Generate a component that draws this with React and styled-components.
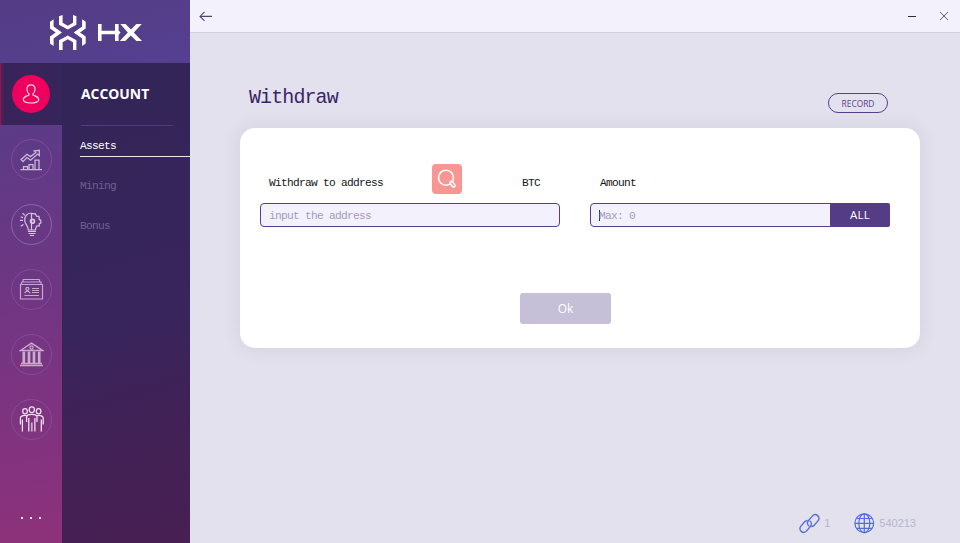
import React from "react";
import styled, { createGlobalStyle, css } from "styled-components";

const Global = createGlobalStyle`
  * { box-sizing: border-box; }
  body { margin: 0; }
  svg { display: block; }
`;

const mono = css`
  font-family: "Liberation Mono", monospace;
  font-size: 11.2px;
  letter-spacing: -0.72px;
  line-height: 14px;
  white-space: pre;
`;

const Window = styled.div`
  display: flex;
  width: 960px;
  height: 543px;
  overflow: hidden;
  background: #e3e1ed;
`;

const Sidebar = styled.aside`
  width: 190px;
  display: flex;
  flex-direction: column;
`;

const Brand = styled.div`
  height: 63px;
  padding: 15px 0 0 49px;
  background: linear-gradient(165deg, #543b86, #553f8a 50%, #543f92);
`;

const Columns = styled.div`
  flex: 1;
  display: flex;
`;

const Rail = styled.nav`
  width: 62px;
  display: flex;
  flex-direction: column;
  align-items: center;
  background: linear-gradient(171deg, #583c88 5%, #6b3783 42%, #7a3481 65%, #8b327b 96%);
`;

const ActiveCell = styled.div`
  width: 62px;
  height: 62px;
  padding: 12px 0 0 12px;
  background: linear-gradient(90deg, #b40d5a 0, #55204f 1.5px, #39245a 4px, #36255a);
`;

const Avatar = styled.div`
  width: 38px;
  height: 38px;
  border-radius: 50%;
  background: #f0005e;
`;

const RailList = styled.div`
  display: flex;
  flex-direction: column;
  gap: 24px;
  padding: 14px 0 0 1px;
`;

const RailButton = styled.div`
  width: 41px;
  height: 41px;
  border: 1px solid ${(p) => (p.$strong ? "#8a66a5" : "#824d97")};
  border-radius: 50%;
  display: flex;
  align-items: center;
  justify-content: center;
`;

const Dots = styled.div`
  display: flex;
  gap: 7px;
  margin: 77px 0 0 0;
`;

const Dot = styled.i`
  width: 2px;
  height: 2px;
  background: #f0e6f2;
`;

const Submenu = styled.nav`
  width: 128px;
  padding-left: 18px;
  background: linear-gradient(165deg, #332558 0%, #38255b 55%, #3e2257 68%, #432155 82%, #481f53 100%);
`;

const Section = styled.h2`
  margin: 0 0 0 1px;
  width: 92px;
  height: 63px;
  border-bottom: 1px solid #503b83;
  color: #fff;
  font: 700 13.9px/62px "Open Sans", sans-serif;
`;

const MenuItem = styled.div`
  ${mono}
  height: 31px;
  margin-bottom: 9px;
  padding-top: 13px;
  color: ${(p) => (p.$active ? "#fff" : "#725f91")};
  border-bottom: 1px solid ${(p) => (p.$active ? "#e9e5f1" : "transparent")};
`;

const Main = styled.div`
  flex: 1;
  display: flex;
  flex-direction: column;
`;

const TitleBar = styled.header`
  height: 33px;
  padding: 0 11px 0 9px;
  display: flex;
  align-items: center;
  background: #f3f1fb;
  border-bottom: 1px solid #d3cfe4;
`;

const WindowControls = styled.div`
  margin-left: auto;
  display: flex;
  align-items: center;
  gap: 23px;
`;

const Heading = styled.div`
  display: flex;
  justify-content: space-between;
  height: 95px;
  padding: 53px 72px 0 59px;
`;

const PageTitle = styled.h1`
  margin: 0;
  font: 400 20px/24px "Liberation Mono", monospace;
  letter-spacing: -0.9px;
  color: #3b2767;
`;

const RecordButton = styled.button`
  width: 60px;
  height: 20px;
  margin-top: 7px;
  padding: 2px 0 0;
  border: 1px solid #573f8c;
  border-radius: 10px;
  background: transparent;
  color: #573f8c;
  font: 8.4px/16px "Open Sans", sans-serif;
`;

const Card = styled.section`
  width: 680px;
  height: 220px;
  margin-left: 50px;
  padding: 36px 30px 0 20px;
  border-radius: 15px;
  background: #fff;
  box-shadow: 0 0 20px rgba(85, 62, 135, 0.11);
`;

const Fields = styled.div`
  display: grid;
  grid-template-columns: 300px 300px;
  column-gap: 30px;
`;

const LabelRow = styled.div`
  ${mono}
  display: flex;
  height: 39px;
  padding: 0 20px 0 ${(p) => p.$indent || 9}px;
  line-height: 39px;
  color: #161616;
`;

const ScanButton = styled.div`
  width: 30px;
  height: 30px;
  margin: 0 auto 0 49px;
  border-radius: 4px;
  background: #f99593;
`;

const InputBox = styled.div`
  ${mono}
  height: 24px;
  display: flex;
  align-items: center;
  padding: 1px 0 0 8px;
  border: 1px solid #573f8c;
  border-radius: 4px;
  background: #f3f1fb;
  color: #a59bc3;
`;

const Caret = styled.i`
  width: 1px;
  height: 11px;
  margin-right: -1px;
  background: #33235d;
`;

const AllButton = styled.button`
  width: 60px;
  height: 24px;
  margin: -2px -1px -1px auto;
  padding: 0;
  border: 0;
  border-radius: 2px;
  background: #553c87;
  color: #fff;
  font: 11.5px/24px "Open Sans", sans-serif;
  letter-spacing: 0.2px;
`;

const OkButton = styled.button`
  display: block;
  width: 91px;
  height: 31px;
  margin: 66px 0 0 260px;
  padding: 0;
  border: 0;
  border-radius: 3px;
  background: #c5bfd7;
  color: #fff;
  font: 12px/31px "Open Sans", sans-serif;
`;

const StatusBar = styled.footer`
  font: 11px/14px "Liberation Sans", sans-serif;
  margin-top: auto;
  height: 40px;
  padding-right: 44px;
  display: flex;
  justify-content: flex-end;
  align-items: center;
  color: #b5b6d0;
`;

const StatusItem = styled.div`
  display: flex;
  align-items: center;
  gap: 4px;
  margin-left: 24px;
`;

const LogoMark = () => (
  <svg width="93" height="36" viewBox="0 0 93 36" fill="#fff">
    <path d="M10 1.2L13.6 0V7.7L18.8 10.7L24 7.7V0L27.4 1.2V9.7L18.8 14.6L10 9.7Z" />
    <path d="M10 35V25.3L18.8 20.4L27.4 25.3V35H24V27.3L18.8 24.3L13.6 27.3V35Z" />
    <path d="M1 6.8L4.6 4.3V11.5L13 17.5L4.6 23.5V31L1 28.5V21.6L6.7 17.5L1 13.4Z" />
    <path d="M36.7 6.8L33.1 4.3V11.5L24.7 17.5L33.1 23.5V31L36.7 28.5V21.6L31 17.5L36.7 13.4Z" />
    <path d="M49 9H52.6V15.8H66V9H69.6V15.4L71.6 17.6L69.6 19.8V26H66V19.2H52.6V26H49Z" />
    <path d="M71.3 9H76.5L82 14.5L87.4 9H92.8L84.8 17.5L93 26H87.4L81.8 20.5L76.2 26H70.8L78.8 17.5Z" />
  </svg>
);

const UserIcon = () => (
  <svg width="38" height="38" viewBox="0 0 38 38" fill="none" stroke="#ffd6e4" strokeWidth="1.2">
    <path d="M19 9.8C16.3 9.8 15 11.7 15 14.2C15 16.4 15.9 18 17 18.8V19.9C15 21.2 11.3 21.3 11.3 24.6C11.3 26.8 14.3 28 19 28S26.7 26.8 26.7 24.6C26.7 21.3 23 21.2 21 19.9V18.8C22.1 18 23 16.4 23 14.2C23 11.7 21.7 9.8 19 9.8Z" />
  </svg>
);

const ChartIcon = () => (
  <svg width="23" height="23" viewBox="0 0 23 23" fill="none" stroke="#ceb9da" strokeWidth="1.25">
    <path d="M0.5 21.5H22M3.5 21V18.5H7.5V21M9 21V16.5H13V21M15 21V12H19V21" />
    <path d="M1.1 11.5L7 6.2L10.5 8.6L15.8 4.4L14.2 2.9L19.3 2.3V7.6L17.6 6.1L10.6 12.3L7 9.6L3 13.6Z" />
  </svg>
);

const IdeaIcon = () => (
  <svg width="25" height="27" viewBox="0 0 25 27" fill="none" stroke="#d8c4df" strokeWidth="1.2">
    <path d="M12.5 2C7.5 2.1 5 6 5.8 10.3C6.4 13.5 9.2 14.5 9.3 19H16.5C16.5 16.5 17.5 15.8 18 14.8L20.3 14.8V12.6L21.8 12V9.2L20.2 8.6L20 5.4L17.4 5.2L16.5 2.8L12.5 2.4V18.5" />
    <circle cx="13.5" cy="10.3" r="1.9" strokeWidth="1.8" />
    <path d="M9 20.5H17M9.5 22.5H16.5M11 24.5H15M1 9.3H4M1.7 15.3L4.5 13.6M3.5 2.2L6 4.4M1.7 5.8L4 6.8" />
  </svg>
);

const NewsIcon = () => (
  <svg width="25" height="23" viewBox="0 0 25 23" fill="none" stroke="#c3a9cd">
    <path d="M4 1.5H20.5M4 1.5V3.5M20.5 1.5V3.5M2.5 4H22V6M2.5 4V6M1.5 6.5H23.5V21H1.5Z" strokeWidth="1.2" />
    <path d="M5.8 15.3C6 12.5 10.6 12.5 11 15.3M13 10.5H20M13 12.5H20M13 14.5H20M5.5 17.5H20" strokeWidth="1.15" />
    <circle cx="8.4" cy="10.9" r="1.5" strokeWidth="1.3" />
  </svg>
);

const BankIcon = () => (
  <svg width="25" height="25" viewBox="0 0 25 25" fill="none" stroke="#c7adcc">
    <path d="M1.5 8.5L12.5 1.2L23.5 8.5ZM1 23.4H24M2 21.6H23" strokeWidth="1.5" />
    <circle cx="12.5" cy="5.5" r="1.6" strokeWidth="1.2" />
    <path d="M4.8 9.5V21M10 9.5V21M15 9.5V21M20.2 9.5V21" strokeWidth="2.7" />
  </svg>
);

const PeopleIcon = () => (
  <svg width="27" height="28" viewBox="0 0 27 28" fill="none" stroke="#f0e4f1" strokeWidth="1.25">
    <ellipse cx="13.8" cy="3.7" rx="2.6" ry="2.8" />
    <ellipse cx="7" cy="5.2" rx="2.3" ry="2.7" />
    <ellipse cx="20.6" cy="5.2" rx="2.3" ry="2.7" />
    <path d="M8.6 16V11C8.6 7.5 19 7.5 19 11V16M10.8 12V25.5M16.9 12V25.5M4.4 13.5V25.5M23.3 13.5V25.5M2.4 18.5V12C2.4 9.8 5.4 9.2 8.3 9.6M25.2 18.5V12C25.2 9.8 22.2 9.2 19.3 9.6" />
    <path d="M13.8 16.5V25.5" strokeWidth="1.8" stroke="#ccaacc" />
  </svg>
);

const BackIcon = () => (
  <svg width="14" height="12" viewBox="0 0 14 12" fill="none" stroke="#51456f">
    <path d="M1 6.4H13M5.5 1.9L1 6.4L5.5 10.9" strokeWidth="1.1" />
  </svg>
);

const MinimizeIcon = () => (
  <svg width="8" height="10" viewBox="0 0 8 10" stroke="#33205f"><path d="M0 5.5H8" /></svg>
);

const CloseIcon = () => (
  <svg width="10" height="10" viewBox="0 0 10 10" stroke="#665b80"><path d="M1 1L9 9M9 1L1 9" /></svg>
);

const SearchIcon = () => (
  <svg width="30" height="30" viewBox="0 0 30 30" fill="none" stroke="#fff">
    <circle cx="14" cy="13.7" r="7.5" strokeWidth="1.6" />
    <path d="M19.3 18.9L21.6 21.6" strokeWidth="4.4" strokeLinecap="round" />
    <path d="M19.8 19.3L21.6 21.4" stroke="#f99593" strokeWidth="1.5" strokeLinecap="round" />
  </svg>
);

const LinkIcon = () => (
  <svg width="21" height="21" viewBox="0 0 21 21" fill="none" stroke="#526ddd" strokeWidth="1.35">
    <path d="M10.2 13.2C8.1 11.7 7.9 9.3 9.5 7.5L13.3 3.1C16.7-0.7 22.3 4 19 7.9L15.2 12.2C14.3 13.2 13.4 13.5 12.4 13.5" />
    <path d="M10.7 7.8C12.8 9.3 13 11.7 11.4 13.5L7.6 17.9C4.2 21.7-1.4 17 1.9 13.1L5.7 8.8C6.6 7.8 7.5 7.5 8.5 7.5" />
  </svg>
);

const GlobeIcon = () => (
  <svg width="21" height="21" viewBox="0 0 21 21" fill="none" stroke="#526ddd" strokeWidth="1.2">
    <circle cx="10.3" cy="10.3" r="9.4" />
    <ellipse cx="10.3" cy="10.3" rx="5.5" ry="9.4" />
    <path d="M10.3 1V20M1 10.3H20M2.5 5.5H18.2M2.5 15.3H18.2" />
  </svg>
);

const railItems = [
  { id: "market", Icon: ChartIcon },
  { id: "ideas", Icon: IdeaIcon, strong: true },
  { id: "news", Icon: NewsIcon },
  { id: "bank", Icon: BankIcon },
  { id: "community", Icon: PeopleIcon },
];

export default function App() {
  return (
    <Window>
      <Global />
      <Sidebar>
        <Brand><LogoMark /></Brand>
        <Columns>
          <Rail>
            <ActiveCell><Avatar><UserIcon /></Avatar></ActiveCell>
            <RailList>
              {railItems.map(({ id, Icon, strong }) => (
                <RailButton key={id} $strong={strong}><Icon /></RailButton>
              ))}
            </RailList>
            <Dots><Dot /><Dot /><Dot /></Dots>
          </Rail>
          <Submenu>
            <Section>ACCOUNT</Section>
            <MenuItem $active>Assets</MenuItem>
            <MenuItem>Mining</MenuItem>
            <MenuItem>Bonus</MenuItem>
          </Submenu>
        </Columns>
      </Sidebar>
      <Main>
        <TitleBar>
          <BackIcon />
          <WindowControls><MinimizeIcon /><CloseIcon /></WindowControls>
        </TitleBar>
        <Heading>
          <PageTitle>Withdraw</PageTitle>
          <RecordButton>RECORD</RecordButton>
        </Heading>
        <Card>
          <Fields>
            <LabelRow>
              <span>Withdraw to address</span>
              <ScanButton><SearchIcon /></ScanButton>
              <span>BTC</span>
            </LabelRow>
            <LabelRow $indent={10}>Amount</LabelRow>
            <InputBox>input the address</InputBox>
            <InputBox>
              <Caret />
              <span>Max: 0</span>
              <AllButton>ALL</AllButton>
            </InputBox>
          </Fields>
          <OkButton>Ok</OkButton>
        </Card>
        <StatusBar>
          <StatusItem><LinkIcon /><span>1</span></StatusItem>
          <StatusItem><GlobeIcon /><span>540213</span></StatusItem>
        </StatusBar>
      </Main>
    </Window>
  );
}
